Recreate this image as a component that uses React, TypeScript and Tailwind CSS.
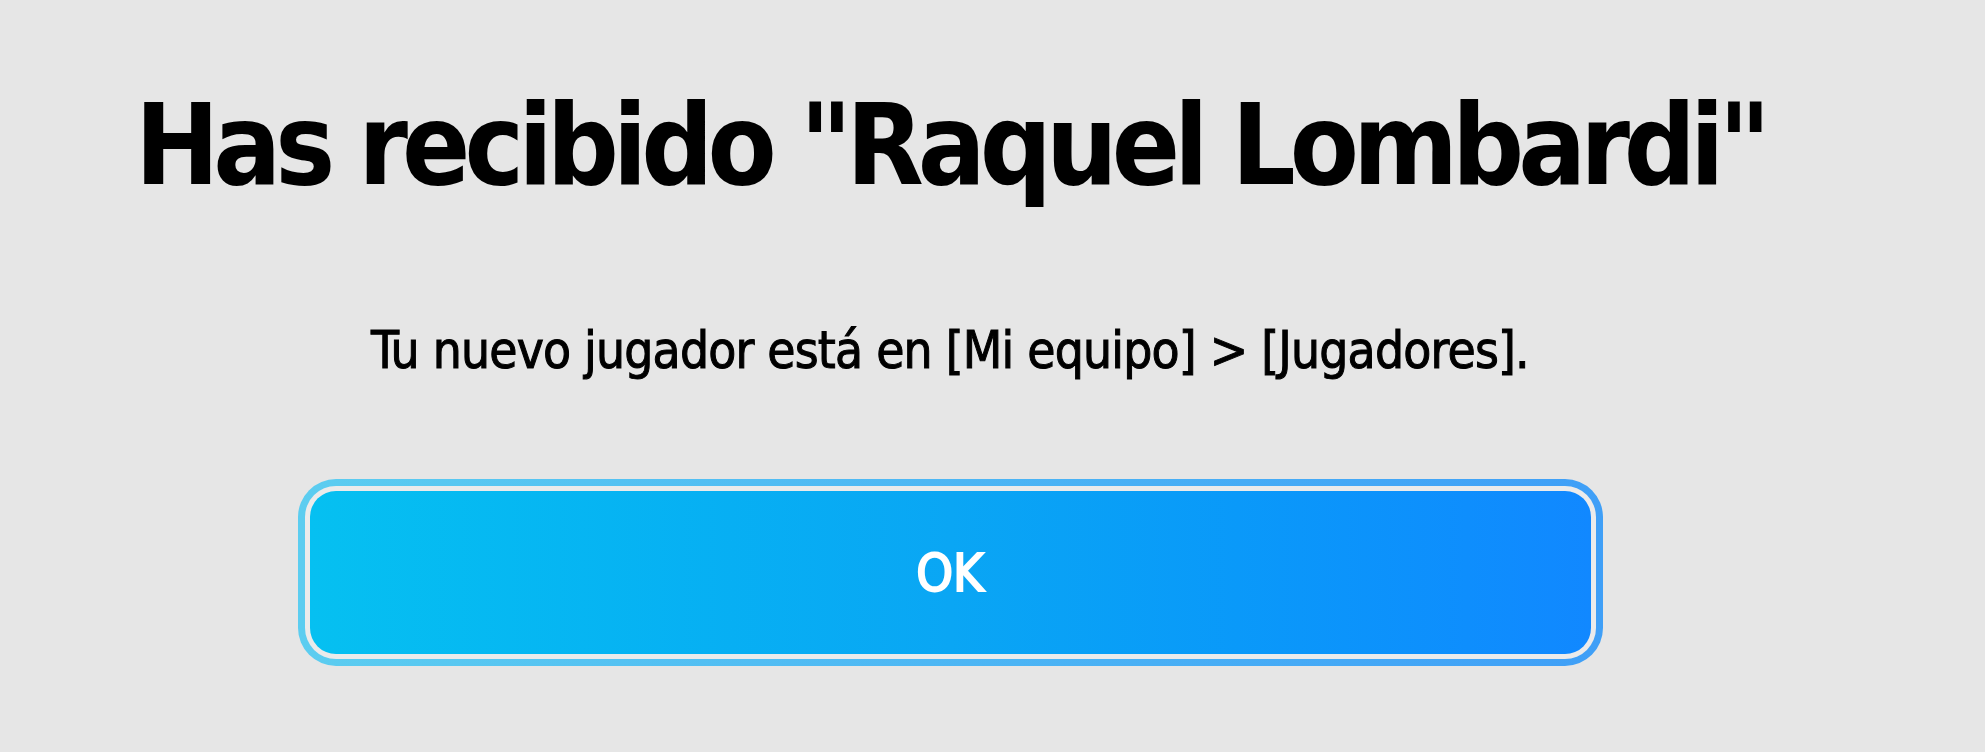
export default function App() {
  const font = { fontFamily: '"DejaVu Sans Condensed", "DejaVu Sans", sans-serif' };
  return (
    <div className="w-[1985px] h-[752px] bg-[#e6e6e6] overflow-hidden">
      <div className="flex flex-col items-center w-[1900px]" style={font}>
        <h1 className="mt-[89px] text-[112px] leading-none font-bold font-stretch-condensed text-black tracking-[-6px] whitespace-nowrap">
          Has recibido "Raquel Lombardi"
        </h1>
        <p className="mt-[124px] text-[51px] leading-none font-stretch-condensed text-black tracking-[-0.8px] whitespace-nowrap [-webkit-text-stroke:1px_black]">
          Tu nuevo jugador está en [Mi equipo] &gt; [Jugadores].
        </p>
        <div className="mt-[103px] w-[1305px] h-[187px] rounded-[38px] p-[7px] bg-gradient-to-r from-[#5ccdf0] to-[#3f9ff7]">
          <div className="w-full h-full rounded-[31px] p-[5px] bg-[#ebebeb]">
            <button className="w-full h-full rounded-[26px] bg-gradient-to-r from-[#06c0f1] via-[#0aa6f4] to-[#1188ff] text-white text-[52px] font-stretch-condensed leading-none flex items-center justify-center [-webkit-text-stroke:2px_white]">
              OK
            </button>
          </div>
        </div>
      </div>
    </div>
  );
}
